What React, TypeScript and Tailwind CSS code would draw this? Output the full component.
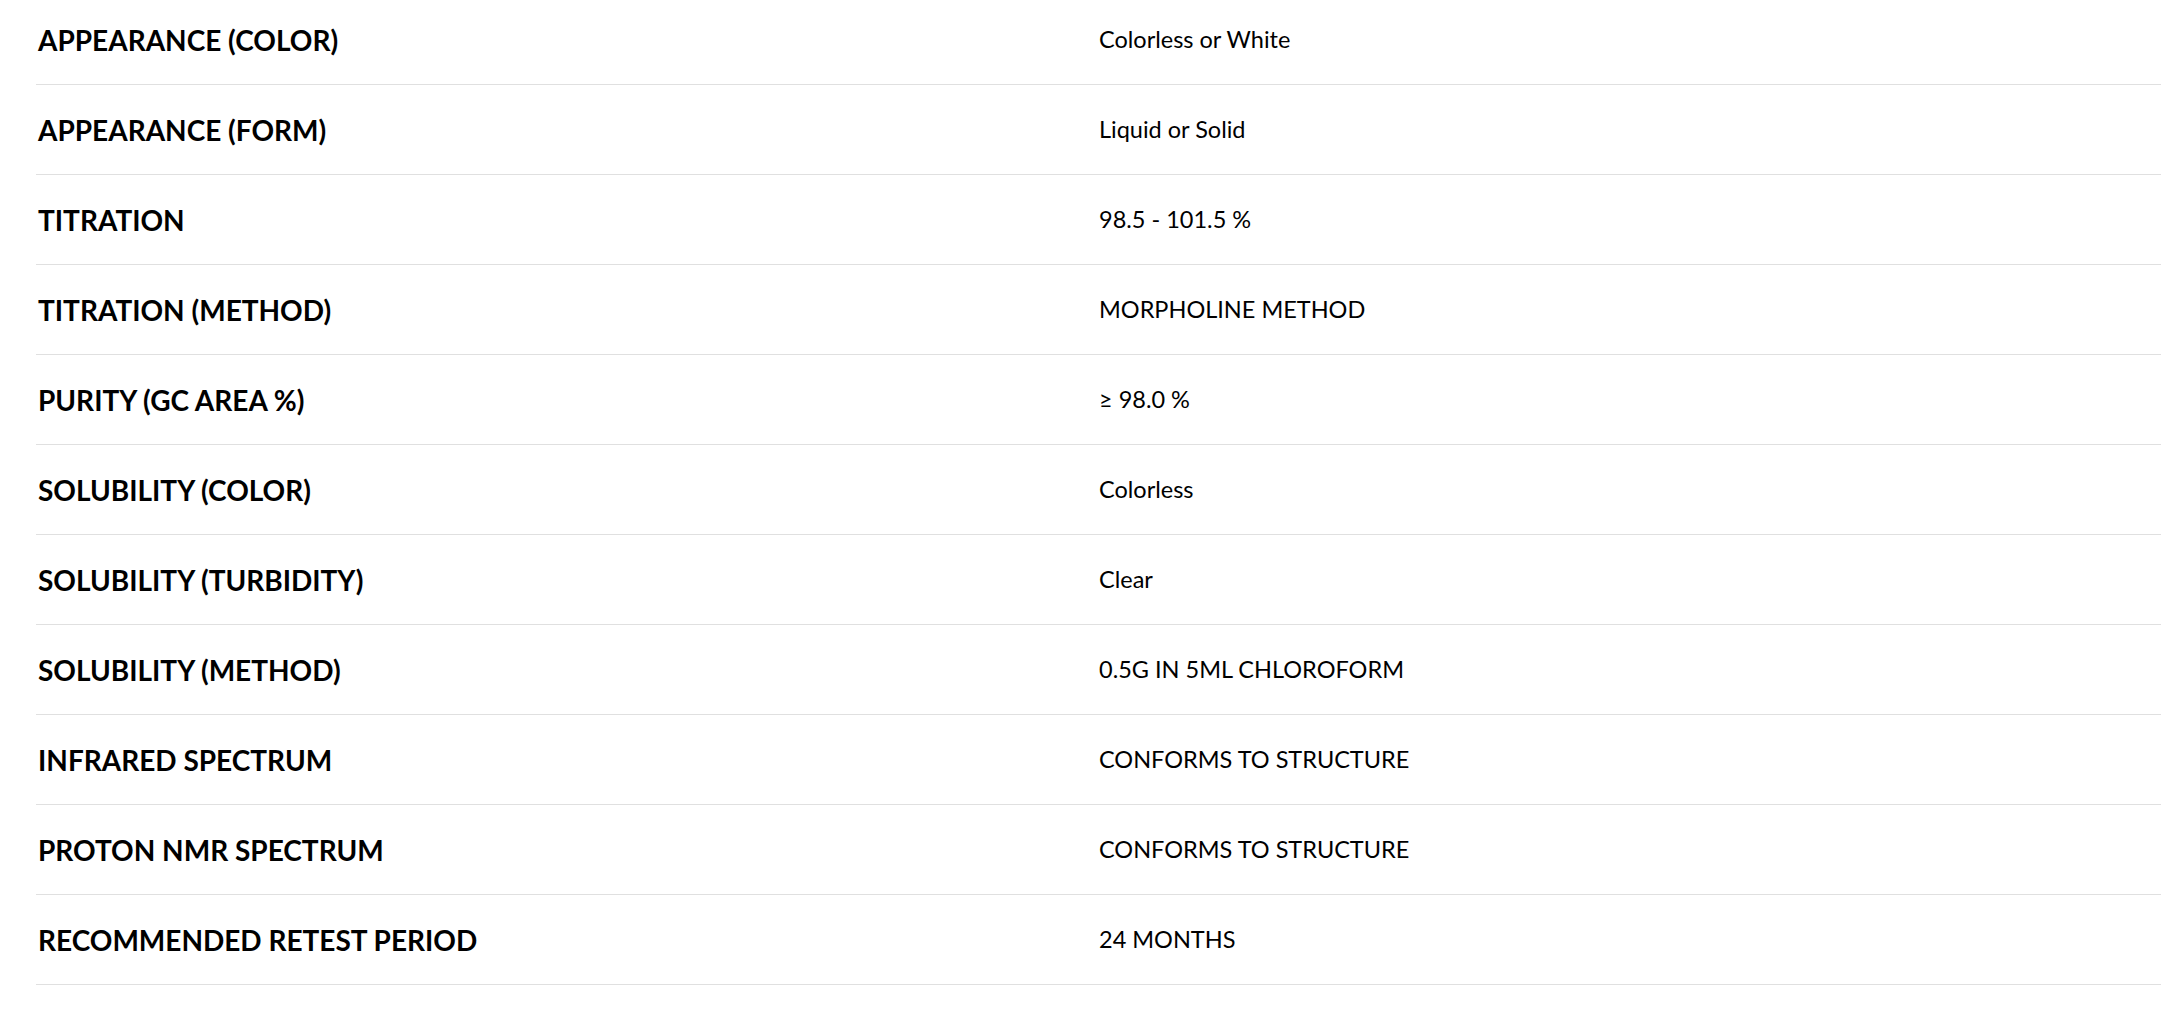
import React from 'react';

const specs = [
  { label: 'APPEARANCE (COLOR)', value: 'Colorless or White' },
  { label: 'APPEARANCE (FORM)', value: 'Liquid or Solid' },
  { label: 'TITRATION', value: '98.5 - 101.5 %' },
  { label: 'TITRATION (METHOD)', value: 'MORPHOLINE METHOD' },
  { label: 'PURITY (GC AREA %)', value: '≥ 98.0 %' },
  { label: 'SOLUBILITY (COLOR)', value: 'Colorless' },
  { label: 'SOLUBILITY (TURBIDITY)', value: 'Clear' },
  { label: 'SOLUBILITY (METHOD)', value: '0.5G IN 5ML CHLOROFORM' },
  { label: 'INFRARED SPECTRUM', value: 'CONFORMS TO STRUCTURE' },
  { label: 'PROTON NMR SPECTRUM', value: 'CONFORMS TO STRUCTURE' },
  { label: 'RECOMMENDED RETEST PERIOD', value: '24 MONTHS' },
];

const App = () => {
  return (
    <div className="min-h-screen bg-white font-['Lato',sans-serif] text-black">
      <div className="-mt-[5px] ml-[36px] mr-[17px]">
        {specs.map((row) => (
          <div
            key={row.label}
            className="flex items-center h-[90px] border-b border-[#e0e0e0]"
          >
            <div className="w-[1063px] shrink-0 pl-[2px] text-[28px] font-bold">
              {row.label}
            </div>
            <div className="text-[23.5px]">{row.value}</div>
          </div>
        ))}
      </div>
    </div>
  );
};

export default App;
